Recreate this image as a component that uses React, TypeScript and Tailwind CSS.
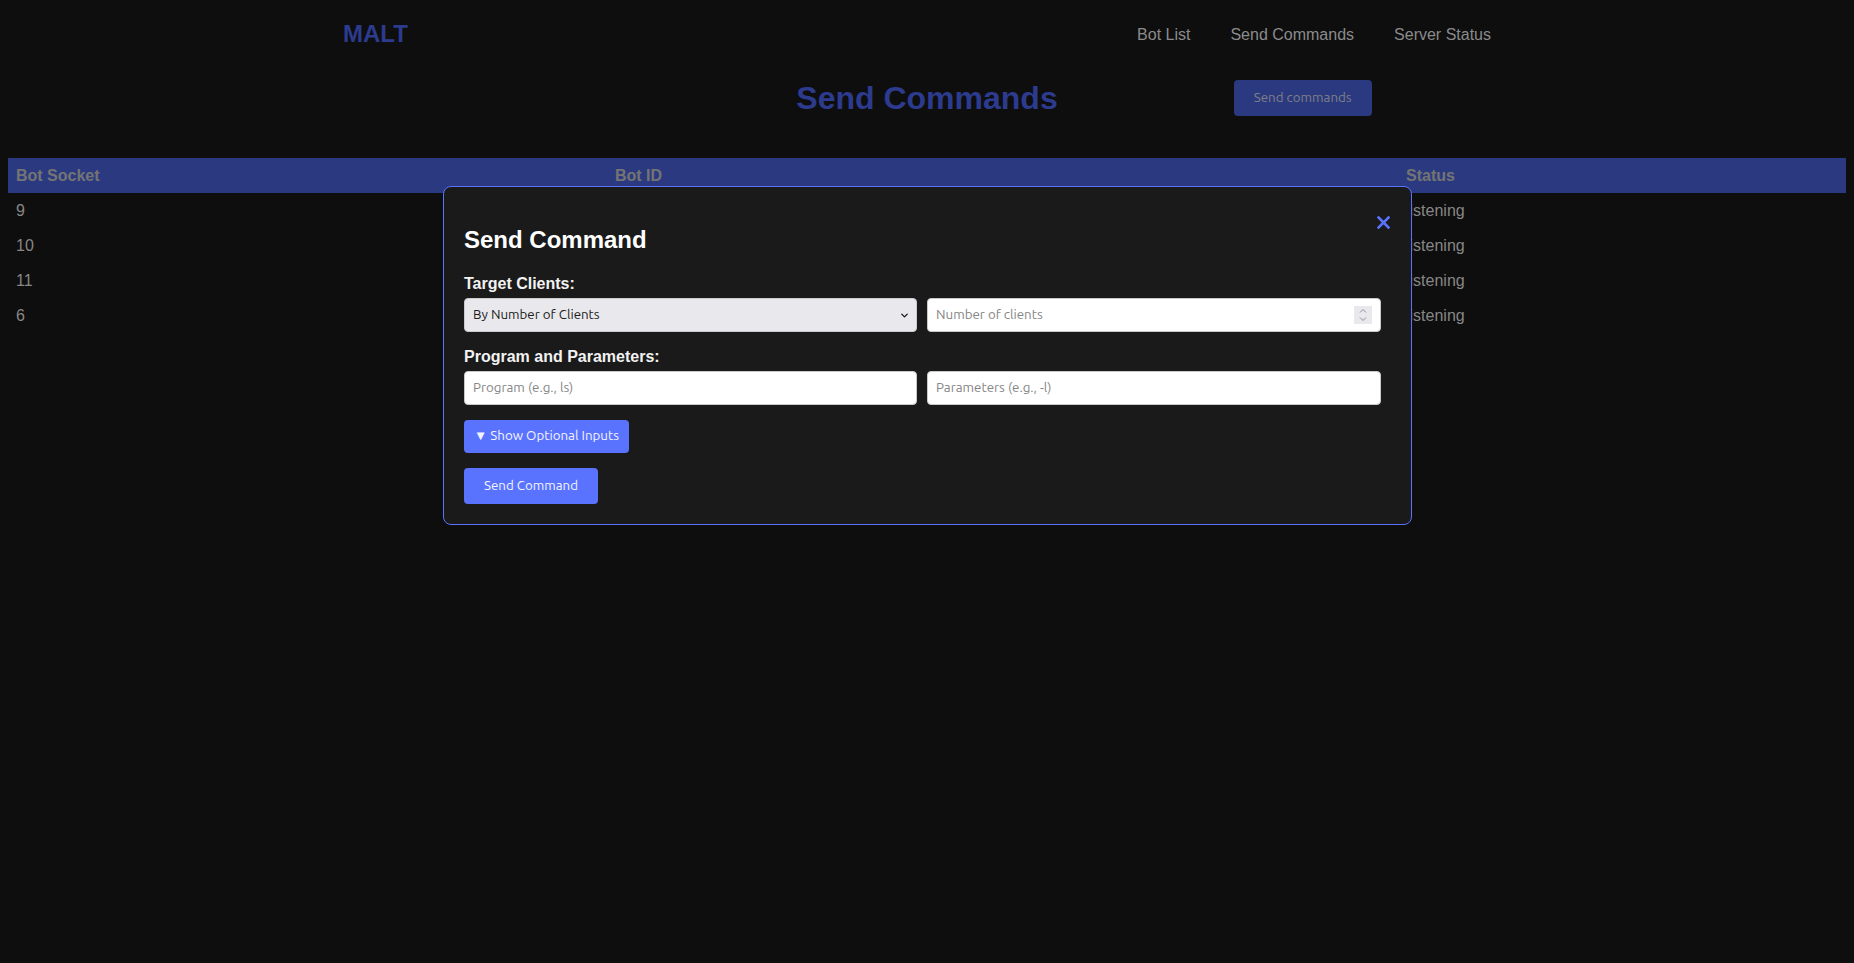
import { ChevronDown } from 'lucide-react'

interface Bot {
  socket: number
  status: string
}

// bot ids sit under the modal, so the column is left empty here
const bots: Bot[] = [
  { socket: 9, status: 'listening' },
  { socket: 10, status: 'listening' },
  { socket: 11, status: 'listening' },
  { socket: 6, status: 'listening' }
]

const navLinks = ['Bot List', 'Send Commands', 'Server Status']

function SendCommandModal() {
  return (
    <div className="fixed left-[443px] top-[186px] w-[969px] rounded-lg border border-[#5a73ff] bg-[#1a1a1a] px-5 py-5">
      <button className="absolute right-[21px] top-[29px] text-[#5a73ff]">
        <svg width="13" height="13" viewBox="0 0 13 13">
          <path
            d="M1.5 1.5 L11.5 11.5 M11.5 1.5 L1.5 11.5"
            stroke="currentColor"
            strokeWidth="2.6"
            strokeLinecap="square"
          />
        </svg>
      </button>

      <h2 className="mb-[21px] mt-[19px] text-[24px] font-bold leading-[27.6px] text-white">
        Send Command
      </h2>

      <div className="mb-[16px]">
        <label className="mb-[5px] block text-[16px] font-bold leading-[18px] text-[#f2f2f2]">
          Target Clients:
        </label>
        <div className="flex gap-[10px] font-['Ubuntu','Open_Sans',sans-serif] text-[13.33px]">
          <div className="relative w-[453px]">
            <select className="h-[34px] w-full appearance-none rounded border border-[#c9c9cf] bg-[#e9e9ed] pl-2 text-[#1b1b1b] outline-none">
              <option>By Number of Clients</option>
              <option>By Client ID</option>
              <option>All Clients</option>
            </select>
            <ChevronDown
              className="pointer-events-none absolute right-[7px] top-[12px] h-[11px] w-[11px] text-[#1b1b1b]"
              strokeWidth={3}
            />
          </div>
          <div className="relative w-[454px]">
            <input
              type="text"
              placeholder="Number of clients"
              className="h-[34px] w-full rounded border border-[#c9c9c9] bg-white px-2 text-[#1b1b1b] outline-none placeholder:text-[#868686]"
            />
            <div className="pointer-events-none absolute right-[9px] top-[8px] flex h-[18px] w-[18px] flex-col items-center justify-center bg-[#e9e9ed]">
              <svg width="8" height="14" viewBox="0 0 8 14" className="text-[#8e8e96]">
                <path d="M1 4.5 L4 1.5 L7 4.5 M1 9.5 L4 12.5 L7 9.5" fill="none" stroke="currentColor" strokeWidth="1" />
              </svg>
            </div>
          </div>
        </div>
      </div>

      <div className="mb-[15px]">
        <label className="mb-[5px] block text-[16px] font-bold leading-[18px] text-[#f2f2f2]">
          Program and Parameters:
        </label>
        <div className="flex gap-[10px] font-['Ubuntu','Open_Sans',sans-serif] text-[13.33px]">
          <input
            type="text"
            placeholder="Program (e.g., ls)"
            className="h-[34px] w-[453px] rounded border border-[#c9c9c9] bg-white px-2 text-[#1b1b1b] outline-none placeholder:text-[#868686]"
          />
          <input
            type="text"
            placeholder="Parameters (e.g., -l)"
            className="h-[34px] w-[454px] rounded border border-[#c9c9c9] bg-white px-2 text-[#1b1b1b] outline-none placeholder:text-[#868686]"
          />
        </div>
      </div>

      <div className="flex flex-col items-start gap-[15px] font-['Ubuntu','Open_Sans',sans-serif] text-[13.33px] text-[#f4f4ff]">
        <button className="flex h-[33px] w-[165px] items-center justify-center rounded bg-[#5a73ff]">
          ▼ Show Optional Inputs
        </button>
        <button className="flex h-[36px] w-[134px] items-center justify-center rounded bg-[#5a73ff]">
          Send Command
        </button>
      </div>
    </div>
  )
}

export default function App() {
  return (
    <div className="min-h-screen bg-[#0e0e0e] font-['Liberation_Sans',Arial,sans-serif]">
      <nav className="mx-auto flex h-[67px] w-[1200px] items-center justify-between px-4">
        <span className="text-[24px] font-bold text-[#2c3b8e]">MALT</span>
        <ul className="flex gap-10 pr-5 pt-[2px] text-[16px] text-[#8b8b8b]">
          {navLinks.map((link) => (
            <li key={link}>{link}</li>
          ))}
        </ul>
      </nav>

      <div className="mt-[13px] grid grid-cols-[1fr_auto_1fr] items-center">
        <div />
        <h1 className="text-[32px] font-bold leading-[36px] text-[#2c3b8e]">Send Commands</h1>
        <div>
          <button className="ml-[176px] h-9 w-[138px] rounded bg-[#2b3a80] font-['Ubuntu','Open_Sans',sans-serif] text-[13.33px] text-[#7f7f86]">
            Send commands
          </button>
        </div>
      </div>

      <div className="mx-2 mt-[42px]">
        <table className="w-full border-collapse text-left text-[16px]">
          <colgroup>
            <col className="w-[599px]" />
            <col className="w-[791px]" />
            <col />
          </colgroup>
          <thead className="bg-[#2b3a80] text-[#747474]">
            <tr>
              <th className="px-2 py-2 leading-[19px]">Bot Socket</th>
              <th className="px-2 py-2 leading-[19px]">Bot ID</th>
              <th className="px-2 py-2 leading-[19px]">Status</th>
            </tr>
          </thead>
          <tbody className="text-[#878787]">
            {bots.map((bot) => (
              <tr key={bot.socket}>
                <td className="px-2 py-2 leading-[19px]">{bot.socket}</td>
                <td className="px-2 py-2 leading-[19px]"></td>
                <td className="px-2 py-2 leading-[19px]">{bot.status}</td>
              </tr>
            ))}
          </tbody>
        </table>
      </div>

      <SendCommandModal />
    </div>
  )
}
